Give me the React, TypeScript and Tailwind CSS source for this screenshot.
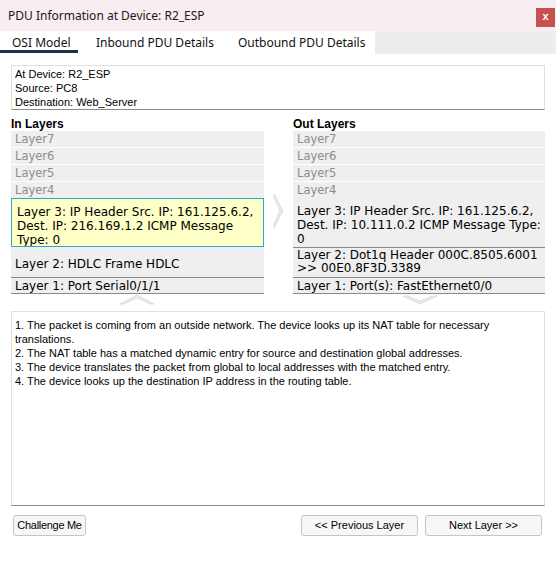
import React from 'react';

const upperLayers = ['Layer7', 'Layer6', 'Layer5', 'Layer4'];

const layerFont = { fontFamily: '"DejaVu Sans", Verdana, sans-serif' };

const UpChevron: React.FC = () => (
  <svg width="34" height="11" viewBox="0 0 34 11">
    <polygon points="0,10 17,1 34,10 30,10 17,4 4,10" fill="#ececec" stroke="#d6d6d6" strokeWidth="0.8" />
  </svg>
);

const DownChevron: React.FC = () => (
  <svg width="34" height="10" viewBox="0 0 34 10">
    <polygon points="0,1 17,9 34,1 30,1 17,6 4,1" fill="#ececec" stroke="#d6d6d6" strokeWidth="0.8" />
  </svg>
);

const RightChevron: React.FC = () => (
  <svg width="11" height="34" viewBox="0 0 11 34">
    <polygon points="1,0 10,17 1,34 1,30 7,17 1,4" fill="#ececec" stroke="#d6d6d6" strokeWidth="0.8" />
  </svg>
);

export default function App() {
  return (
    <div className="w-[556px] h-[565px] bg-white flex flex-col overflow-hidden" style={{ fontFamily: '"Liberation Sans", Arial, sans-serif' }}>
      {/* Title bar */}
      <div className="h-[31px] bg-[#f8edf1] flex items-start shrink-0">
        <div className="pl-2 pt-[7px] text-[12px] text-[#1a1a1a]" style={{ fontFamily: '"Noto Sans", sans-serif' }}>
          PDU Information at Device: R2_ESP
        </div>
        <div className="ml-auto mt-[8px] mr-[1px] w-[19px] h-[19px] bg-[#c75050] flex items-center justify-center text-white text-[11px] font-bold leading-none pb-[2px]">
          x
        </div>
      </div>

      {/* Tabs */}
      <div className="h-[23px] bg-[#ededed] flex shrink-0" style={{ fontFamily: '"Noto Sans", sans-serif' }}>
        <div className="w-[375px] bg-white flex text-[12px] text-[#111] whitespace-nowrap">
          <div className="relative w-[83px] pl-[12px] pt-[3px]">
            OSI Model
            <div className="absolute left-0 bottom-[1px] w-[78px] h-[3px] bg-[#1b3050]" />
          </div>
          <div className="pl-[13px] pt-[3px]">Inbound PDU Details</div>
          <div className="pl-[24px] pt-[3px]">Outbound PDU Details</div>
        </div>
      </div>

      <div className="flex flex-col px-[11px] pt-[11px]">
        {/* Device info */}
        <div className="h-[45px] border border-[#e0e0e0] border-b-[#8a8a8a] pl-[3px] pt-[1px] text-[11px] leading-[14px] text-black">
          <div>At Device: R2_ESP</div>
          <div>Source: PC8</div>
          <div>Destination: Web_Server</div>
        </div>

        {/* Layers */}
        <div className="flex mt-[7px]">
          <div className="w-[253px] flex flex-col">
            <div className="text-[12px] font-bold leading-[14px] h-[14px] text-black">In Layers</div>
            <div className="flex flex-col gap-px" style={layerFont}>
              {upperLayers.map((l) => (
                <div key={l} className="h-[16px] bg-[#efefef] text-[11.5px] leading-[16px] pl-[4px] text-[#8c8c8c]">{l}</div>
              ))}
            </div>
            <div className="h-[49px] bg-[#ffffc8] border border-[#2aa9d4] pl-[5px] pt-[6px] text-[12px] leading-[14px] text-black overflow-hidden" style={layerFont}>
              Layer 3: IP Header Src. IP: 161.125.6.2, Dest. IP: 216.169.1.2 ICMP Message Type: 0
            </div>
            <div className="h-[31px] bg-[#efefef] border-b border-[#8a8a8a] pl-[4px] pt-[7px] text-[12px] leading-[20px] text-black" style={layerFont}>
              Layer 2: HDLC Frame HDLC
            </div>
            <div className="h-[16px] bg-[#efefef] border-b border-[#8a8a8a] pl-[4px] pt-[1px] text-[12px] leading-[14px] text-black" style={layerFont}>
              Layer 1: Port Serial0/1/1
            </div>
            <div className="flex pl-[109px] h-[17px]">
              <UpChevron />
            </div>
          </div>

          <div className="w-[29px] flex justify-center pt-[77px]">
            <RightChevron />
          </div>

          <div className="w-[252px] flex flex-col">
            <div className="text-[12px] font-bold leading-[14px] h-[14px] text-black">Out Layers</div>
            <div className="flex flex-col gap-px" style={layerFont}>
              {upperLayers.map((l) => (
                <div key={l} className="h-[16px] bg-[#efefef] text-[11.5px] leading-[16px] pl-[4px] text-[#8c8c8c]">{l}</div>
              ))}
            </div>
            <div className="h-[50px] bg-[#efefef] border-b border-[#8a8a8a] pl-[4px] pt-[6px] text-[12px] leading-[14px] text-black overflow-hidden" style={layerFont}>
              Layer 3: IP Header Src. IP: 161.125.6.2, Dest. IP: 10.111.0.2 ICMP Message Type: 0
            </div>
            <div className="h-[30px] bg-[#efefef] border-b border-[#8a8a8a] pl-[4px] pt-[1px] text-[12px] leading-[13px] text-black" style={layerFont}>
              Layer 2: Dot1q Header 000C.8505.6001 &gt;&gt; 00E0.8F3D.3389
            </div>
            <div className="h-[16px] bg-[#efefef] border-b border-[#8a8a8a] pl-[4px] pt-[1px] text-[12px] leading-[14px] text-black" style={layerFont}>
              Layer 1: Port(s): FastEthernet0/0
            </div>
            <div className="flex pl-[110px] pt-[1px] h-[17px]">
              <DownChevron />
            </div>
          </div>
        </div>

        {/* Description */}
        <div className="h-[195px] border border-[#e0e0e0] border-b-[#8a8a8a] pl-[3px] pt-[6px] text-[11px] leading-[14px] text-black">
          <div>1. The packet is coming from an outside network. The device looks up its NAT table for necessary translations.</div>
          <div>2. The NAT table has a matched dynamic entry for source and destination global addresses.</div>
          <div>3. The device translates the packet from global to local addresses with the matched entry.</div>
          <div>4. The device looks up the destination IP address in the routing table.</div>
        </div>

        {/* Buttons */}
        <div className="flex mt-[9px] pl-[2px] text-[11px] text-black">
          <button className="h-[21px] w-[73px] border border-[#c4c4c4] rounded-[3px] bg-[#f7f7f7] tracking-[-0.3px]">Challenge Me</button>
          <button className="ml-auto h-[21px] w-[117px] border border-[#c4c4c4] rounded-[3px] bg-[#f7f7f7]">&lt;&lt; Previous Layer</button>
          <button className="ml-[7px] mr-[3px] h-[21px] w-[117px] border border-[#c4c4c4] rounded-[3px] bg-[#f7f7f7]">Next Layer &gt;&gt;</button>
        </div>
      </div>
    </div>
  );
}
